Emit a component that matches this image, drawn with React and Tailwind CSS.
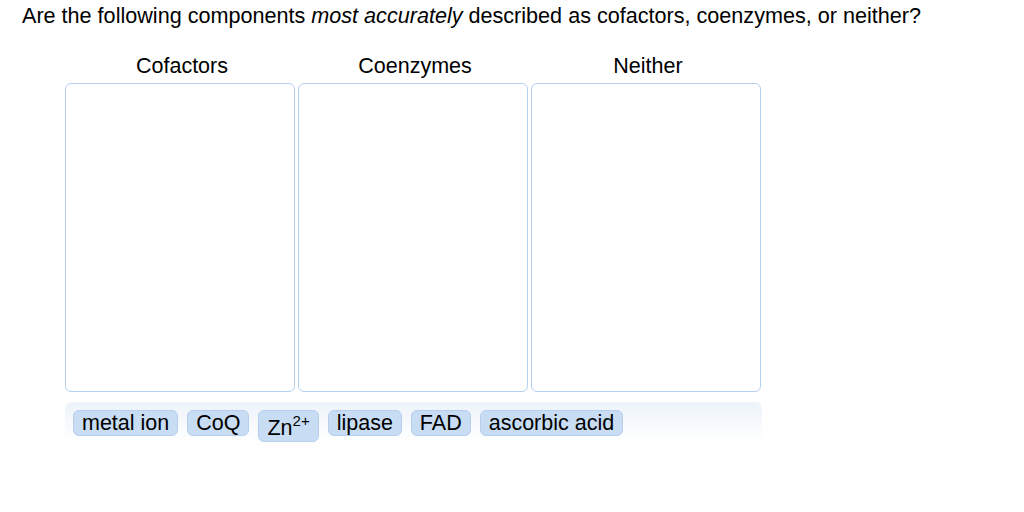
export default function App() {
  const columns = ['Cofactors', 'Coenzymes', 'Neither'];

  return (
    <div className="w-[1024px] h-[512px] bg-white text-black font-['Liberation_Sans',Arial,sans-serif] overflow-hidden">
      <p className="pl-[22px] pt-[3px] text-[21.6px] leading-[26px]">
        Are the following components <em>most accurately</em> described as cofactors, coenzymes, or neither?
      </p>

      <div className="ml-[65px] mt-[24px] w-[697px]">
        <div className="flex gap-[3px]">
          {columns.map((c) => (
            <div key={c} className="w-[230px] flex flex-col">
              <div className="text-center text-[21.5px] leading-[26px] mb-[4px] pl-[4px]">{c}</div>
              <div className="h-[309px] border border-[#b5d0ee] rounded-[6px] bg-white" />
            </div>
          ))}
        </div>

        <div className="mt-[10px] h-[40px] rounded-[6px] bg-gradient-to-b from-[#edf3fa] to-white flex items-start gap-[9px] pl-[8px] pt-[8px]">
          <Chip>metal ion</Chip>
          <Chip>CoQ</Chip>
          <div className="h-[32px] px-[8px] rounded-[6px] bg-[#c8ddf3] border border-[#b5d0ee] text-[21.5px] leading-[24px] pt-[5px]">
            Zn<span className="text-[15px] relative -top-[9px]">2+</span>
          </div>
          <Chip>lipase</Chip>
          <Chip>FAD</Chip>
          <Chip>ascorbic acid</Chip>
        </div>
      </div>
    </div>
  );
}

function Chip({ children }) {
  return (
    <div className="h-[26px] px-[8px] rounded-[6px] bg-[#c8ddf3] border border-[#b5d0ee] text-[21.5px] leading-[24px]">
      {children}
    </div>
  );
}
